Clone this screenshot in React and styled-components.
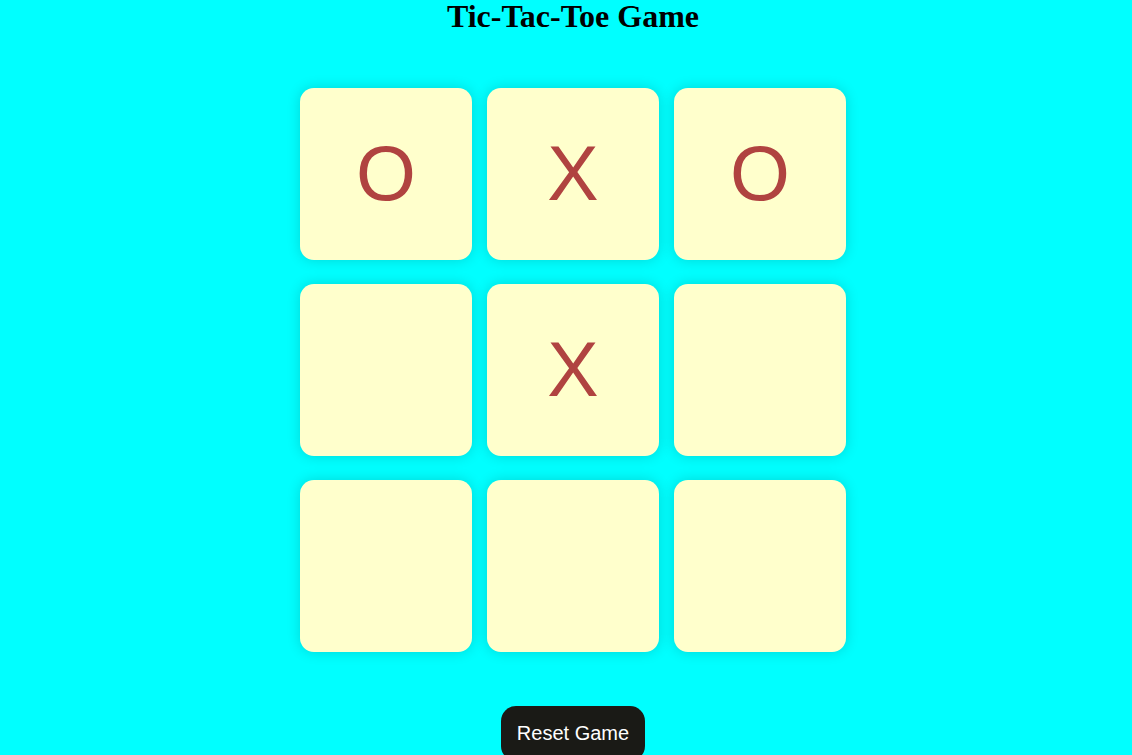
import React from "react";
import styled, { createGlobalStyle } from "styled-components";

const Global = createGlobalStyle`
  html, body { margin: 0; padding: 0; background: #00ffff; }
  body { overflow: hidden; }
`;

const Page = styled.div`
  box-sizing: border-box;
  width: 1132px;
  min-height: 755px;
  padding-left: 14px;
  display: flex;
  flex-direction: column;
  align-items: center;
  background: #00ffff;
`;

const Title = styled.h1`
  margin: -2px 0 0;
  font-family: "Liberation Serif", "Times New Roman", serif;
  font-size: 32px;
  font-weight: bold;
  color: #000;
  line-height: 37px;
`;

const Board = styled.div`
  margin-top: 53px;
  display: grid;
  grid-template-columns: repeat(3, 172px);
  grid-auto-rows: 172px;
  column-gap: 15px;
  row-gap: 24px;
`;

const Cell = styled.div`
  background: #ffffcc;
  border-radius: 14px;
  box-shadow: 0 0 14px rgba(0, 0, 0, 0.16);
  display: flex;
  align-items: center;
  justify-content: center;
  font-family: "Liberation Sans", Arial, sans-serif;
  font-size: 77px;
  line-height: 1;
  padding-bottom: 2px;
  box-sizing: border-box;
  color: #b04340;
  user-select: none;
`;

const ResetButton = styled.button`
  margin-top: 54px;
  background: #1a1a16;
  color: #fff;
  border: none;
  border-radius: 15px;
  padding: 16px 16px;
  font-family: "Liberation Sans", Arial, sans-serif;
  font-size: 20px;
  line-height: 23px;
  cursor: pointer;
`;

const cells = ["O", "X", "O", "", "X", "", "", "", ""];

export default function App() {
  return (
    <>
      <Global />
      <Page>
        <Title>Tic-Tac-Toe Game</Title>
        <Board>
          {cells.map((v, i) => (
            <Cell key={i}>{v}</Cell>
          ))}
        </Board>
        <ResetButton>Reset Game</ResetButton>
      </Page>
    </>
  );
}
